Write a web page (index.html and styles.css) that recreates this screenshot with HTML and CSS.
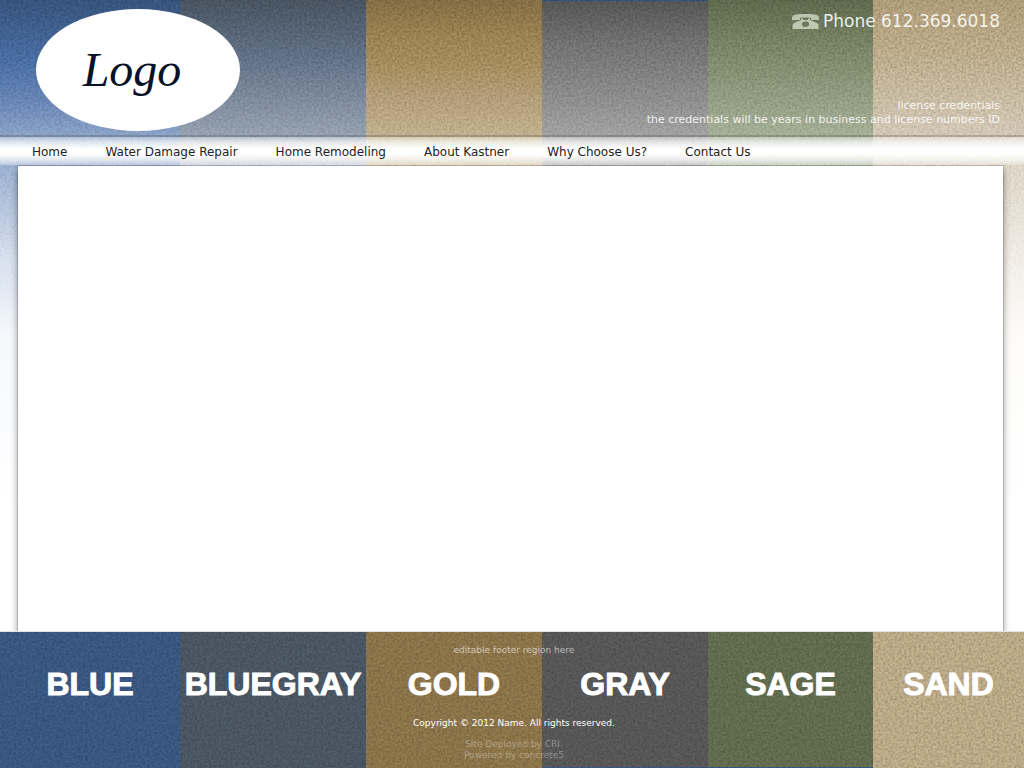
FILE: index.html
```html
<!DOCTYPE html>
<html lang="en">
<head>
<meta charset="utf-8">
<meta name="viewport" content="width=device-width, initial-scale=1">
<title>Name</title>
<link rel="stylesheet" href="styles.css">
</head>
<body>
<div class="page">
  <div class="backdrop bands" aria-hidden="true">
    <div class="band band-blue"></div>
    <div class="band band-bluegray"></div>
    <div class="band band-gold"></div>
    <div class="band band-gray"></div>
    <div class="band band-sage"></div>
    <div class="band band-sand"></div>
  </div>
  <svg class="grain grain-top" aria-hidden="true">
    <filter id="grain" x="0" y="0" width="100%" height="100%">
      <feTurbulence type="fractalNoise" baseFrequency="0.42" numOctaves="2" seed="4"/>
      <feColorMatrix values="0 0 0 0 0  0 0 0 0 0  0 0 0 0 0  0.4 0 0 0 -0.13"/>
    </filter>
    <rect width="100%" height="100%" filter="url(#grain)"/>
  </svg>

  <header class="header">
    <a class="logo" href="#">Logo</a>
    <div class="contact">
      <p class="phone">
        <svg class="phone-icon" viewBox="0 0 27 15" aria-hidden="true">
          <path fill-rule="evenodd" d="M3 .8C9-.3 18-.3 24 .8Q27 1.500 27 4.500V6H19V3.800Q13.500 3 8 3.800V6H0V4.500Q0 1.500 3 .8ZM9 4.600H11V6H16V4.600H18V6L25 9Q26.500 10 26.500 12V15H.5V12Q.5 10 2 9L9 6ZM13.500 7.500A3.500 2.800 0 1 0 13.500 13.100A3.500 2.800 0 1 0 13.500 7.500Z"/>
        </svg>
        <span>Phone 612.369.6018</span>
      </p>
      <p class="credentials">license credentials<br>the credentials will be years in business and license numbers ID</p>
    </div>
  </header>

  <nav class="nav">
    <a href="#">Home</a>
    <a href="#">Water Damage Repair</a>
    <a href="#">Home Remodeling</a>
    <a href="#">About Kastner</a>
    <a href="#">Why Choose Us?</a>
    <a href="#">Contact Us</a>
  </nav>

  <main class="main"><div class="sheet"></div></main>

  <footer class="footer">
    <div class="bands swatches">
      <div class="swatch swatch-blue"><span>BLUE</span></div>
      <div class="swatch swatch-bluegray"><span>BLUEGRAY</span></div>
      <div class="swatch swatch-gold"><span>GOLD</span></div>
      <div class="swatch swatch-gray"><span>GRAY</span></div>
      <div class="swatch swatch-sage"><span>SAGE</span></div>
      <div class="swatch swatch-sand"><span>SAND</span></div>
    </div>
    <svg class="grain grain-footer" aria-hidden="true"><rect width="100%" height="100%" filter="url(#grain)"/></svg>
    <div class="notes">
      <p class="region">editable footer region here</p>
      <p class="copyright">Copyright © 2012 Name. All rights reserved.</p>
      <p class="credit">Site Deployed by CRI.<br>Powered by concrete5</p>
    </div>
  </footer>
</div>
</body>
</html>
```
FILE: styles.css
```css
* { box-sizing: border-box; }

body {
  margin: 0;
  font-family: "DejaVu Sans", Verdana, sans-serif;
  background: #fff;
}

p { margin: 0; }

a { color: inherit; text-decoration: none; }

.page {
  position: relative;
  isolation: isolate;
  display: flex;
  flex-direction: column;
  min-height: 100vh;
}

/* Six colour columns shared by the header backdrop and the footer */
.bands {
  display: grid;
  grid-template-columns: 180fr 186fr 176fr 166fr 165fr 151fr;
}

.backdrop {
  position: absolute;
  inset: 0;
  z-index: -2;
}

.band-blue { background: linear-gradient(#3c5a86, #4f77b0 60px, #6e8dc0 100px, #93abd0 135px, #a6bbdb 175px, #dbe4f1 260px, #f6f8fc 340px, #fff 500px); }
.band-bluegray { background: linear-gradient(#4e5b69, #6b7c92 60px, #8794a7 100px, #9daab9 135px, #cbd3de 165px, #fff 500px); }
.band-gold { background: linear-gradient(#8e764a, #a88c59 35px, #b39866 65px, #bfa983 100px, #cbb995 135px, #dfd0b4 165px, #fff 500px); }
.band-gray { background: linear-gradient(#5c5c5c, #7c7c7c 45px, #929292 90px, #aaa 135px, #bbb 165px, #fff 500px); box-shadow: inset 0 1px #345a8c; }
.band-sage { background: linear-gradient(#667254, #828f6d 45px, #98a487 90px, #adb89f 135px, #bec7b3 165px, #fff 500px); }
.band-sand { background: linear-gradient(#bca982, #cab894 50px, #d3c5a9 90px, #ddd2c0 135px, #e7dfd0 175px, #f5f1ea 260px, #fdfcfa 340px, #fff 500px); }

.grain {
  position: absolute;
  inset: 0;
  width: 100%;
  height: 100%;
}

.grain-top {
  z-index: -1;
  height: 400px;
  -webkit-mask-image: linear-gradient(#000 60px, rgba(0, 0, 0, .5) 170px, transparent 320px);
  mask-image: linear-gradient(#000 60px, rgba(0, 0, 0, .5) 170px, transparent 320px);
}

.header {
  display: flex;
  justify-content: space-between;
  padding: 9px 24px 4px 36px;
}

.logo {
  display: flex;
  align-items: center;
  justify-content: center;
  width: 204px;
  height: 122px;
  padding-right: 12px;
  border-radius: 50%;
  background: #fff;
  color: #061326;
  font: italic 48px/1 "Liberation Serif", serif;
}

.contact {
  display: flex;
  flex-direction: column;
  justify-content: space-between;
  align-items: flex-end;
  padding-bottom: 4px;
  color: rgba(255, 255, 255, .88);
}

.phone {
  display: flex;
  align-items: center;
  gap: 4px;
  font-size: 17px;
  line-height: 24px;
}

.phone-icon { width: 27px; height: 15px; fill: rgba(220, 228, 210, .72); }

.credentials {
  text-align: right;
  font-size: 11px;
  line-height: 14px;
}

.nav {
  display: flex;
  align-items: center;
  gap: 38px;
  height: 30px;
  padding: 2px 32px 0;
  border-top: 2px solid rgba(60, 60, 60, .25);
  background: linear-gradient(rgba(255, 255, 255, .3), rgba(255, 255, 255, .7) 5px, #fff 12px, #fff 17px, rgba(255, 255, 255, .7) 23px, rgba(255, 255, 255, .3));
  background-clip: padding-box;
  color: #222;
  font-size: 12px;
}

.main {
  flex: 1;
  display: flex;
  overflow: hidden;
  padding: 1px 21px 0 18px;
}

.sheet {
  flex: 1;
  background: #fff;
  box-shadow: 0 0 0 1px rgba(0, 0, 0, .12), 0 4px 7px rgba(0, 0, 0, .45);
}

.footer {
  position: relative;
  display: grid;
  min-height: 137px;
  border-top: 1px solid #e4e4e4;
}

.swatches, .notes { grid-area: 1 / 1; }

.swatch {
  padding-top: 32px;
  color: #fff;
  font: bold 32px/40px "Liberation Sans", Arial, sans-serif;
  -webkit-text-stroke: 1px #fff;
  text-align: center;
}

/* Text stays above the grain layer */
.swatch span, .notes {
  position: relative;
  z-index: 1;
}

.swatch-blue { background: #3d5d8a; }
.swatch-bluegray { background: #4f5c6a; }
.swatch-gold { background: #957c4e; }
.swatch-gray { background: #5d5d5d; box-shadow: inset 0 -1px #3b5d8c; }
.swatch-sage { background: #687454; box-shadow: inset 0 -1px #3b5d8c; }
.swatch-sand { background: #c8b590; }

.notes {
  padding: 13px 0 6px 4px;
  color: #fff;
  text-align: center;
  font-size: 9px;
  line-height: 11px;
}

.region { color: rgba(255, 255, 255, .6); }
.copyright { margin-top: 62px; }
.credit { margin-top: 10px; color: rgba(255, 255, 255, .35); }
```
